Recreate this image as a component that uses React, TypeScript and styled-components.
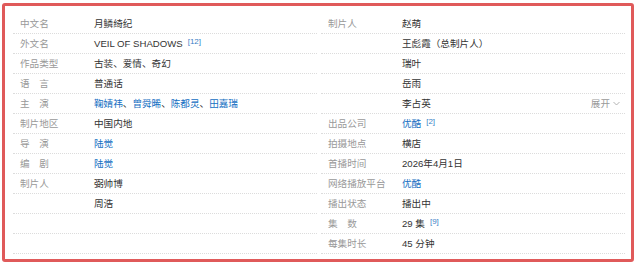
import React from 'react';
import styled, { createGlobalStyle } from 'styled-components';

const GlobalStyle = createGlobalStyle`
    html, body {
        margin: 0;
        padding: 0;
        background: #fff;
    }
    body {
        font-family: "Liberation Sans", Arial, "Noto Sans CJK SC", sans-serif;
    }
`;

const Frame = styled.div`
    box-sizing: border-box;
    width: 632px;
    height: 259px;
    margin: 3px 0 0 2px;
    padding: 8px 6px 0 8px;
    border: 3px solid #e05a5a;
    border-radius: 3px;
    display: grid;
    grid-template-columns: 1fr 1fr;
    column-gap: 4px;
    align-content: start;
`;

const Column = styled.dl`
    margin: 0;
    display: flex;
    flex-direction: column;
`;

const Row = styled.div`
    height: 20px;
    box-sizing: border-box;
    display: flex;
    align-items: center;
    border-bottom: 1px dotted #dcdcdc;
    font-size: 9.6px;
    line-height: 12px;
`;

const Label = styled.dt`
    width: 74px;
    flex: none;
    padding-left: 7px;
    color: #999;
    white-space: nowrap;
`;

const Value = styled.dd`
    margin: 0;
    flex: 1;
    display: flex;
    align-items: center;
    padding-right: 5px;
    color: #333;
    white-space: nowrap;
`;

const Link = styled.a`
    color: #136ec2;
    text-decoration: none;
`;

const Ref = styled.sup`
    margin-left: 5px;
    font-size: 8px;
    line-height: 8px;
    color: #3a7fc6;
    align-self: flex-start;
    margin-top: 0;
`;

const Expand = styled.span`
    margin-left: auto;
    display: flex;
    align-items: center;
    gap: 3px;
    color: #999;
`;

type Cell = { label?: string; value?: React.ReactNode };

const actors = ['鞠婧祎', '曾舜晞', '陈都灵', '田嘉瑞'];

const left: Cell[] = [
    { label: '中文名', value: '月鳞绮纪' },
    { label: '外文名', value: <>VEIL OF SHADOWS<Ref>[12]</Ref></> },
    { label: '作品类型', value: '古装、爱情、奇幻' },
    { label: '语\u3000言', value: '普通话' },
    {
        label: '主\u3000演',
        value: actors.map((a, i) => (
            <React.Fragment key={a}>
                {i > 0 && '、'}
                <Link href="#">{a}</Link>
            </React.Fragment>
        )),
    },
    { label: '制片地区', value: '中国内地' },
    { label: '导\u3000演', value: <Link href="#">陆觉</Link> },
    { label: '编\u3000剧', value: <Link href="#">陆觉</Link> },
    { label: '制片人', value: '弼帅博' },
    { value: '周浩' },
    {},
    {},
];

const right: Cell[] = [
    { label: '制片人', value: '赵萌' },
    { value: '王彪霞（总制片人）' },
    { value: '瑞叶' },
    { value: '岳雨' },
    {
        value: (
            <>
                李占英
                <Expand>
                    展开
                    <svg width="7" height="5" viewBox="0 0 7 5">
                        <path d="M0.5 1 L3.5 4 L6.5 1" fill="none" stroke="#aaa" strokeWidth="0.9" />
                    </svg>
                </Expand>
            </>
        ),
    },
    { label: '出品公司', value: <><Link href="#">优酷</Link><Ref>[2]</Ref></> },
    { label: '拍摄地点', value: '横店' },
    { label: '首播时间', value: '2026年4月1日' },
    { label: '网络播放平台', value: <Link href="#">优酷</Link> },
    { label: '播出状态', value: '播出中' },
    { label: '集\u3000数', value: <>29 集<Ref>[9]</Ref></> },
    { label: '每集时长', value: '45 分钟' },
];

const InfoColumn: React.FC<{ cells: Cell[] }> = ({ cells }) => (
    <Column>
        {cells.map((c, i) => (
            <Row key={i}>
                <Label>{c.label}</Label>
                <Value>{c.value}</Value>
            </Row>
        ))}
    </Column>
);

const App: React.FC = () => (
    <>
        <GlobalStyle />
        <Frame>
            <InfoColumn cells={left} />
            <InfoColumn cells={right} />
        </Frame>
    </>
);

export default App;
